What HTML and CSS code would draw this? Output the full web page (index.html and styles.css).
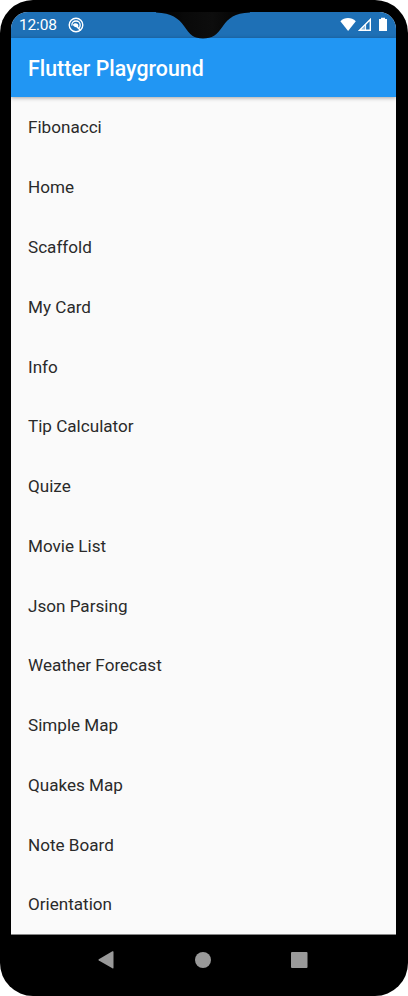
FILE: index.html
```html
<!DOCTYPE html>
<html lang="en">
<head>
<meta charset="utf-8">
<title>Flutter Playground</title>
<link rel="stylesheet" href="styles.css">
</head>
<body>
<div class="phone">
  <div class="screen">
    <div class="status">
      <span class="time">12:08</span>
      <svg class="debug" width="16" height="16" viewBox="0 0 16 16"><circle cx="8" cy="8" r="6.8" fill="none" stroke="#fff" stroke-width="1.400"/><path d="M3.900 8.600C3.600 5.500 5.600 4 8 4C10.700 4 12.200 6 12.200 8C12.200 9.300 11.900 10.100 11.300 10.900" fill="none" stroke="#fff" stroke-width="1.300"/><path d="M4.800 7.800C5.700 5.900 8.300 5.600 9.600 7C10.500 8 10.500 9 10.100 9.800L13.300 13L12.200 14L8.300 10.200C6.900 10.300 5.500 9.500 4.800 7.800Z" fill="#fff"/></svg>
      <svg class="signals" width="50" height="16" viewBox="0 0 50 16"><path d="M.4 4.200C4.500-.200 11.500-.200 15.800 4.200L8.100 14Z" fill="#fff"/><path d="M19.500 13.300L30.300 2.500V13.300Z" fill="none" stroke="#fff" stroke-width="1.400"/><path d="M20 13.500L25.600 8V13.500Z" fill="#fff" fill-opacity=".5"/><path d="M25.600 7V13.300" stroke="#fff"/><path d="M39 2H41V.7H45V2H47V14H39Z" fill="#fff"/></svg>
    </div>
    <header class="appbar"><h1>Flutter Playground</h1></header>
    <ul class="list">
      <li>Fibonacci</li>
      <li>Home</li>
      <li>Scaffold</li>
      <li>My Card</li>
      <li>Info</li>
      <li>Tip Calculator</li>
      <li>Quize</li>
      <li>Movie List</li>
      <li>Json Parsing</li>
      <li>Weather Forecast</li>
      <li>Simple Map</li>
      <li>Quakes Map</li>
      <li>Note Board</li>
      <li>Orientation</li>
    </ul>
  </div>
  <nav class="nav">
    <svg width="18" height="20" viewBox="0 0 18 20"><path d="M1.800 9.200L15.400 1.300Q16.500 .800 16.500 2V17.500Q16.500 18.800 15.400 18.200L1.800 10.500Q.800 9.850 1.800 9.200Z" fill="#999"/></svg>
    <svg width="18" height="20" viewBox="0 0 18 20"><circle cx="9" cy="10" r="8" fill="#999"/></svg>
    <svg width="18" height="20" viewBox="0 0 18 20"><rect x="1" y="2" width="16.500" height="16" rx="1" fill="#999"/></svg>
  </nav>
  <svg class="notch" width="94" height="28" viewBox="0 0 94 28"><defs><linearGradient id="glass"><stop offset="0" stop-color="#000"/><stop offset=".3" stop-color="#090909"/><stop offset=".6" stop-color="#0d0d0d"/><stop offset="1" stop-color="#000"/></linearGradient></defs><path d="M0 0H94V.6C78 1.500 73 6 67 14C61 23 56 26.500 47 26.500C38 26.500 34 23 28 14C22 6 16 1.500 0 .600Z" fill="url(#glass)"/></svg>
</div>
</body>
</html>
```
FILE: styles.css
```css
* { box-sizing: border-box; }
body { margin: 0; background: #fff; font-family: Roboto, "Liberation Sans", sans-serif; }
.phone {
  position: relative;
  width: 408px;
  height: 996px;
  padding: 12px 12px 0 11px;
  background: #000;
  border-radius: 33px;
  overflow: hidden;
}
.screen {
  height: 923px;
  background: #fafafa;
  border-bottom: 1px solid #858585;
  border-radius: 17px 17px 0 0;
  overflow: hidden;
}
.status {
  display: flex;
  height: 25.5px;
  padding-left: 8px;
  padding-right: 6px;
  background: #1e70b6;
  color: #fff;
}
.time { width: 49px; font-size: 15.5px; line-height: 27px; letter-spacing: -0.15px; }
.debug { margin-top: 5px; }
.signals { margin: 5px 0 0 auto; }
.appbar {
  height: 59.500px;
  padding-left: 17px;
  background: #2196f3;
  box-shadow: 0 1px 4px rgba(0, 0, 0, .35);
}
h1 { margin: 0; color: #fff; font-size: 21.3px; line-height: 61px; font-weight: 500; letter-spacing: 0.03px; }
.list { list-style: none; margin: 0; padding: 0.45px 0 0 17px; }
.list li { height: 59.780px; line-height: 60px; font-size: 17.1px; color: #2a2a2a; }
.nav { display: flex; gap: 79px; padding: 15px 0 0 86px; }
.nav svg:last-child { margin-left: -1px; }
.notch { position: absolute; left: 156px; top: 12px; }
```
